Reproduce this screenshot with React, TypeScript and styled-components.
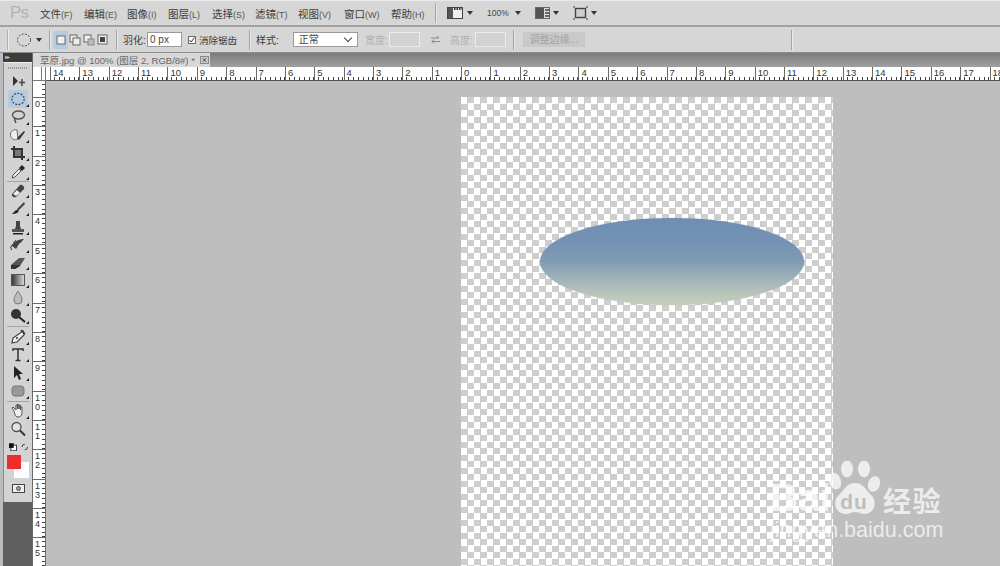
import React from "react";
import styled, { createGlobalStyle } from "styled-components";

const Global = createGlobalStyle`
  html, body { margin: 0; padding: 0; background: #bebebe; }
  * { box-sizing: border-box; }
`;

const UNIT = 29.36;
const FONT = `"Liberation Sans", "Noto Sans CJK SC", sans-serif`;

const Page = styled.div`
  width: 1000px; height: 566px; overflow: hidden;
  display: flex; flex-direction: column;
  font-family: ${FONT}; color: #3a3a3a;
`;

/* ---------- menu bar ---------- */
const MenuBar = styled.div`
  height: 25px; flex: none; display: flex; align-items: center;
  background: #d6d6d6; border-top: 1px solid #eaeaea;
`;
const Logo = styled.div`
  width: 40px; padding-left: 10px; font-size: 17px; color: #b2b2b2; letter-spacing: -0.8px;
`;
const MenuList = styled.div`display: flex; width: 395px;`;
const MenuItem = styled.div<{ $w: number }>`
  width: ${p => p.$w}px; font-size: 10.5px; white-space: nowrap; color: #3c3c3c;
`;
const Hot = styled.span`font-size: 9px; color: #555;`;
const Sep = styled.div<{ $ml?: number; $mr?: number; $h?: number }>`
  width: 1px; height: ${p => p.$h ?? 20}px; flex: none; background: #a3a3a3;
  margin-left: ${p => p.$ml ?? 0}px; margin-right: ${p => p.$mr ?? 0}px;
  box-shadow: 1px 0 0 #e8e8e8;
`;
const Arrow = styled.span<{ $ml?: number }>`
  display: inline-block; flex: none; margin-left: ${p => p.$ml ?? 0}px;
  border-left: 3px solid transparent; border-right: 3px solid transparent;
  border-top: 4px solid #333;
`;
const Slot = styled.div<{ $ml?: number; $w?: number }>`
  display: flex; align-items: center; flex: none;
  margin-left: ${p => p.$ml ?? 0}px;
  ${p => (p.$w ? `width: ${p.$w}px;` : "")}
`;
const ZoomText = styled.span`font-size: 8.5px; color: #444; width: 21px; white-space: nowrap;`;

/* ---------- options bar ---------- */
const Divider = styled.div`height: 2px; flex: none; background: #a2a2a2;`;
const OptionsBar = styled.div`
  height: 26px; flex: none; display: flex; align-items: center;
  background: #d6d6d6; border-bottom: 1px solid #8e8e8e;
`;
const Grip = styled.div`
  width: 1px; height: 20px; margin-left: 7px; flex: none; background: #b0b0b0; box-shadow: 1px 0 0 #eee;
`;
const ModeBtn = styled.div<{ $on?: boolean; $w: number }>`
  width: ${p => p.$w}px; height: 18px; flex: none; display: flex; align-items: center; justify-content: center;
  background: ${p => (p.$on ? "#b4cbe0" : "transparent")};
`;
const Label = styled.span<{ $ml?: number; $w?: number; $off?: boolean; $s?: number }>`
  display: block; flex: none; font-size: ${p => p.$s ?? 10}px; white-space: nowrap;
  margin-left: ${p => p.$ml ?? 0}px;
  width: ${p => (p.$w ? `${p.$w}px` : "auto")};
  color: ${p => (p.$off ? "#b2b2b2" : "#3c3c3c")};
`;
const Field = styled.div<{ $ml?: number; $w: number; $off?: boolean }>`
  width: ${p => p.$w}px; height: 15px; flex: none; margin-left: ${p => p.$ml ?? 0}px;
  background: ${p => (p.$off ? "#d2d2d2" : "#fff")};
  border: 1px solid ${p => (p.$off ? "#ececec" : "#9a9a9a")};
  font-size: 10px; line-height: 13px; padding-left: 2px; color: #444;
  display: flex; align-items: center; justify-content: space-between;
`;
const Check = styled.div`
  width: 8px; height: 8px; flex: none; margin-left: 6px; background: #fff; border: 1px solid #6f6f6f;
  display: flex; align-items: center; justify-content: center;
`;
const Chevron = styled.span`
  width: 6px; height: 6px; margin: -3px 6px 0 0;
  border-right: 1px solid #444; border-bottom: 1px solid #444; transform: rotate(45deg);
`;
const AdjustBtn = styled.div`
  width: 62px; height: 15px; flex: none; margin-left: 9px;
  background: #c9c9c9; color: #a3a3a3; font-size: 10px; text-align: center; line-height: 15px;
`;

/* ---------- body ---------- */
const Body = styled.div`flex: 1; min-height: 0; display: flex;`;
const LeftCol = styled.div`
  width: 33px; flex: none; display: flex; flex-direction: column; padding-left: 3px;
  background: #b9bdc1; border-right: 1px solid #6a6a6a;
`;
const PanelHead = styled.div`
  height: 9px; flex: none; background: #3c3c3c; color: #c8c8c8;
  font-size: 6px; line-height: 8px; padding-left: 2px; letter-spacing: -1px;
`;
const Tools = styled.div`
  flex: none; height: 440px; background: #d3d3d3; border-left: 1px solid #8c8c8c;
  border-top: 1px solid #eee; display: flex; flex-direction: column; align-items: center;
`;
const DarkFill = styled.div`flex: 1; background: #5f5f5f;`;
const ToolGrip = styled.div`
  width: 20px; height: 2px; margin: 4px 0 2px; flex: none;
  background: repeating-linear-gradient(90deg, #9a9a9a 0 1px, transparent 1px 2px);
`;
const Tool = styled.div<{ $h: number; $on?: boolean; $more?: boolean }>`
  width: 20px; height: ${p => p.$h}px; flex: none; position: relative;
  display: flex; align-items: center; justify-content: center;
  background: ${p => (p.$on ? "#b4cbe0" : "transparent")};
  ${p => p.$more ? `&::after { content: ""; position: absolute; right: -1px; bottom: 1px; border-left: 3px solid transparent; border-bottom: 3px solid #222; }` : ""}
`;
const ToolSep = styled.div<{ $mt: number; $mb: number }>`
  width: 22px; height: 1px; flex: none; background: #a5a5a5;
  margin: ${p => p.$mt}px 0 ${p => p.$mb}px;
`;
const Swatches = styled.div`
  position: relative; width: 24px; height: 23px; flex: none; margin-top: 1px;
`;
const Fg = styled.div`
  position: absolute; left: 1px; top: 0; width: 14px; height: 14px; background: #ee2b2d; z-index: 1;
`;
const Bg = styled.div`
  position: absolute; left: 8px; top: 7px; width: 15px; height: 16px; background: #fff;
`;
const Mini = styled.div`
  width: 20px; height: 15px; flex: none; margin-top: 2px; display: flex; align-items: center; gap: 4px; padding-left: 1px;
`;
const Mask = styled.div`
  width: 13px; height: 9px; margin-top: 6px; flex: none; background: #eee; border: 1px solid #444;
  display: flex; align-items: center; justify-content: center;
`;
const Hole = styled.div`width: 5px; height: 5px; border-radius: 50%; background: #999; border: 1px solid #555;`;

const RightCol = styled.div`flex: 1; min-width: 0; display: flex; flex-direction: column;`;
const TabBar = styled.div`
  height: 14px; flex: none; display: flex;
  background: linear-gradient(#7b7b7b, #a0a0a0);
`;
const Tab = styled.div`
  width: 177px; flex: none; background: #d8d8d8; display: flex; align-items: center;
  padding-left: 7px; font-size: 9.5px; color: #666; white-space: nowrap; gap: 5px;
`;
const TabClose = styled.div`
  width: 9px; height: 8px; flex: none; border: 1px solid #888; background: #ccc;
  color: #444; font-size: 9px; line-height: 6px; text-align: center;
`;

const HRulerRow = styled.div`height: 14px; flex: none; display: flex; background: #fff;`;
const Corner = styled.div`
  width: 13px; flex: none; background: #fff;
  border-right: 1px solid #777; border-bottom: 1px solid #777;
  background-image: linear-gradient(#777, #777); background-size: 1px 100%;
  background-position: 8px 0; background-repeat: no-repeat;
`;
const HRuler = styled.div`
  flex: 1; display: flex; overflow: hidden; padding-left: 4px; border-bottom: 1px solid #555;
`;
const HCell = styled.div`
  width: ${UNIT}px; flex: none; height: 100%; border-left: 1.5px solid #6a6a6a;
  padding-left: 2px; font-size: 9.5px; line-height: 11px; color: #333;
  background:
    repeating-linear-gradient(90deg, #444 0 1px, transparent 1px ${UNIT / 6}px) 3px 100% / 100% 3px no-repeat;
`;

const Work = styled.div`flex: 1; min-height: 0; display: flex;`;
const VRuler = styled.div`
  width: 13px; flex: none; display: flex; flex-direction: column; overflow: hidden;
  background: #fff; border-right: 1px solid #6a6a6a;
`;
const VHead = styled.div`
  height: 16px; flex: none;
  background: repeating-linear-gradient(180deg, #444 0 1px, transparent 1px ${UNIT / 6}px) 100% 3px / 3px 100% no-repeat;
`;
const VCell = styled.div`
  height: ${UNIT}px; flex: none; border-top: 1.5px solid #6a6a6a;
  padding: 2px 0 0 2px; font-size: 9px; line-height: 9px; color: #333;
  background: repeating-linear-gradient(180deg, #444 0 1px, transparent 1px ${UNIT / 6}px) 100% 3px / 3px 100% no-repeat;
  span { display: block; width: 6px; }
`;

const Canvas = styled.div`
  flex: 1; min-width: 0; background: #bebebe; padding: 16px 0 0 415px; position: relative; overflow: hidden;
`;
const Doc = styled.div`
  width: 372px; height: 480px; position: relative;
  background: repeating-conic-gradient(#cecece 0 25%, #fff 0 50%) 0 0 / 13px 13px;
`;
const Sky = styled.div`
  position: absolute; left: 79px; top: 121px; width: 264px; height: 87px; border-radius: 50%;
  background: linear-gradient(#6f8eb2 0%, #7592b3 30%, #819bb4 50%, #9fb3b8 70%, #bcc8ba 90%, #c6ceba 100%);
  box-shadow: 0 0 1px rgba(120,140,170,.6);
`;
const Watermark = styled.div`
  position: absolute; left: 724px; top: 380px; width: 210px; height: 90px; color: rgba(255,255,255,.72);
`;
const BaiText = styled.div`
  position: absolute; left: 0; top: 18px; font: 700 39px/38px "Liberation Sans", sans-serif;
`;
const Paw = styled.svg`position: absolute; left: 50px; top: 0;`;
const Du = styled.div`
  position: absolute; left: 69px; top: 31px; width: 30px; text-align: center; letter-spacing: 1px;
  font: 700 21px/20px "Liberation Sans", sans-serif; color: #bebebe;
`;
const Jing = styled.div`
  position: absolute; left: 113px; top: 21px; font: 700 28px/36px "Noto Sans CJK SC", sans-serif; white-space: nowrap; letter-spacing: 1.5px;
`;
const Url = styled.div`
  position: absolute; left: 0; top: 56px; font: 400 21.5px/26px "Liberation Sans", sans-serif; white-space: nowrap;
`;

/* ---------- icons ---------- */
const Ico = ({ w = 16, h = 16, children }: { w?: number; h?: number; children: React.ReactNode }) => (
  <svg width={w} height={h} viewBox={`0 0 ${w} ${h}`} fill="none">{children}</svg>
);

const modeIcon = (n: number) => (
  <Ico w={12} h={12}>
    {n === 0 && <rect x="2" y="2" width="8" height="8" fill="#f2f2f2" stroke="#666" />}
    {n === 1 && <><rect x="1" y="1" width="7" height="7" fill="#eee" stroke="#666" /><rect x="4" y="4" width="7" height="7" fill="#eee" stroke="#666" /></>}
    {n === 2 && <><rect x="1" y="1" width="7" height="7" fill="#eee" stroke="#666" /><rect x="5" y="5" width="6" height="6" fill="#bbb" stroke="#888" /></>}
    {n === 3 && <><rect x="1" y="1" width="9" height="9" fill="#eee" stroke="#666" /><rect x="3" y="3" width="5" height="5" fill="#444" /></>}
  </Ico>
);

type ToolDef = { h: number; on?: boolean; more?: boolean; icon: React.ReactNode };
const TOOLS: { mt: number; mb: number; items: ToolDef[] }[] = [
  {
    mt: 0, mb: 0,
    items: [
      { h: 19, icon: <Ico><path d="M3 3v10l5-5z" fill="#333" /><path d="M12 6v7M9 9.5h6" stroke="#444" strokeWidth="1.4" /></Ico> },
      { h: 18, on: true, more: true, icon: <Ico><ellipse cx="8" cy="8" rx="6.2" ry="5.6" stroke="#444" strokeWidth="1.2" strokeDasharray="2 1.3" /></Ico> },
      { h: 18, more: true, icon: <Ico><ellipse cx="8.5" cy="6" rx="6" ry="4" stroke="#555" strokeWidth="1.4" /><path d="M5 9c-1 2 0 3 1 5" stroke="#444" strokeWidth="1.4" /></Ico> },
      { h: 18, more: true, icon: <Ico><path d="M7 3a5 5 0 1 0 1 9z" fill="#eee" stroke="#666" /><path d="M7 11l7-7 1 1-6 8z" fill="#333" /></Ico> },
      { h: 18, more: true, icon: <Ico><path d="M4 1v11h11M1 4h11v11" stroke="#333" strokeWidth="2" /><path d="M5 5h6v6H5z" fill="#777" /></Ico> },
      { h: 19, more: true, icon: <Ico><path d="M2 14l1-3 6-6 2 2-6 6z" fill="#eee" stroke="#555" /><path d="M9 4l3-3 3 3-3 3z" fill="#222" /></Ico> },
    ],
  },
  {
    mt: 0, mb: 0,
    items: [
      { h: 17, more: true, icon: <Ico><path d="M2 11l8-9c2-1 5 2 4 4l-8 8c-2 1-5-1-4-3z" fill="#444" /><path d="M3 11l4-4 3 3-4 3z" fill="#eee" /></Ico> },
      { h: 18, more: true, icon: <Ico><path d="M14 2L7 9l1 2 7-7z" fill="#444" /><path d="M1 14c3 0 3-4 6-4 2 0 2 2 0 3-2 1-4 1-6 1z" fill="#222" /></Ico> },
      { h: 19, more: true, icon: <Ico><path d="M6 2h4v5l1 3H5l1-3z" fill="#444" /><rect x="2" y="10" width="12" height="3" fill="#555" /><rect x="3" y="14" width="10" height="1.5" fill="#222" /></Ico> },
      { h: 18, more: true, icon: <Ico><path d="M2 9c2-5 7-7 12-7-2 2-2 3-5 5l-3 5z" fill="#444" /><path d="M2 13a3 3 0 0 1 4-5" stroke="#333" /><path d="M6 3l-3 3" stroke="#555" /></Ico> },
      { h: 17, more: true, icon: <Ico><path d="M1 10l8-7h6l-5 8-5 3H1z" fill="#555" /><path d="M1 10h8l1 1-5 3H1z" fill="#333" /></Ico> },
      { h: 18, more: true, icon: <Ico><defs><linearGradient id="g"><stop stopColor="#333" /><stop offset="1" stopColor="#ddd" /></linearGradient></defs><rect x="1.5" y="2.5" width="13" height="11" fill="url(#g)" stroke="#555" /></Ico> },
      { h: 18, more: true, icon: <Ico><path d="M8 1c3 5 4 6 4 9a4 4 0 0 1-8 0c0-3 1-4 4-9z" fill="#bdbdbd" stroke="#777" /></Ico> },
      { h: 18, more: true, icon: <Ico><circle cx="6" cy="6" r="5" fill="#333" /><path d="M9 9l6 5" stroke="#222" strokeWidth="2" /></Ico> },
    ],
  },
  {
    mt: 1, mb: 1,
    items: [
      { h: 18, more: true, icon: <Ico><path d="M13 2l1 4-7 7-5 1 1-5z" fill="#eee" stroke="#444" strokeWidth="1.2" /><path d="M11 1l4 4" stroke="#333" strokeWidth="1.6" /><circle cx="7" cy="9" r="1" fill="#333" /></Ico> },
      { h: 17, more: true, icon: <Ico><path d="M3 4V2h10v2M8 2v11M5.5 13.5h5" stroke="#333" strokeWidth="1.5" /></Ico> },
      { h: 19, more: true, icon: <Ico><path d="M4 1v12l3-3 2 5 2-1-2-5h4z" fill="#222" /></Ico> },
      { h: 18, more: true, icon: <Ico><rect x="2" y="3" width="12" height="10" rx="3" fill="#999" stroke="#777" /></Ico> },
    ],
  },
  {
    mt: 1, mb: 0,
    items: [
      { h: 18, more: true, icon: <Ico><path d="M4 8L2 5l1-1 3 3V2h1.5v4V1.5H9V6V2.5h1.5V7V4H12v6c0 3-2 4-4 4-3 0-3-3-4-6z" fill="#eee" stroke="#444" strokeWidth=".9" /></Ico> },
      { h: 17, icon: <Ico><circle cx="6.5" cy="6" r="4.5" fill="#e4e4e4" stroke="#555" strokeWidth="1.3" /><path d="M10 9.5l5 5" stroke="#333" strokeWidth="2" /></Ico> },
    ],
  },
];

const hLabels = [14,13,12,11,10,9,8,7,6,5,4,3,2,1,0,1,2,3,4,5,6,7,8,9,10,11,12,13,14,15,16,17,18];
const vLabels = [0,1,2,3,4,5,6,7,8,9,10,11,12,13,14,15];
const menus: [string, string, number][] = [
  ["文件", "(F)", 44], ["编辑", "(E)", 43], ["图像", "(I)", 41], ["图层", "(L)", 44], ["选择", "(S)", 43],
  ["滤镜", "(T)", 43], ["视图", "(V)", 46], ["窗口", "(W)", 47], ["帮助", "(H)", 44],
];

export default function App() {
  return (
    <Page>
      <Global />
      <MenuBar>
        <Logo>Ps</Logo>
        <MenuList>{menus.map(([m, k, w]) => <MenuItem key={m} $w={w}>{m}<Hot>{k}</Hot></MenuItem>)}</MenuList>
        <Sep />
        <Slot $ml={11}><Ico w={17} h={14}><rect x=".5" y="1.5" width="15" height="11" fill="#eee" stroke="#444" /><rect x="1" y="2" width="5" height="10" fill="#555" /><path d="M7 3h8" stroke="#333" strokeWidth="2" strokeDasharray="1.5 1" /></Ico></Slot>
        <Arrow $ml={3} />
        <Slot $ml={14}><ZoomText>100%</ZoomText></Slot>
        <Arrow $ml={7} />
        <Slot $ml={14}><Ico w={15} h={14}><rect x=".5" y="1.5" width="14" height="11" fill="#ddd" stroke="#666" /><rect x="1" y="2" width="8" height="10" fill="#555" /><path d="M10 4h4M10 7h4M10 10h4" stroke="#444" strokeWidth="1.6" /></Ico></Slot>
        <Arrow $ml={3} />
        <Slot $ml={14}><Ico w={15} h={14}><rect x="2.5" y="2.5" width="10" height="9" fill="#cfcfcf" stroke="#444" strokeWidth="1.4" /><path d="M0 1h2M13 1h2M0 13h2M13 13h2" stroke="#444" /></Ico></Slot>
        <Arrow $ml={3} />
      </MenuBar>
      <Divider />
      <OptionsBar>
        <Grip />
        <Slot $ml={8}><Ico w={16} h={14}><ellipse cx="8" cy="7" rx="6.5" ry="6" stroke="#555" strokeDasharray="2 1.3" /></Ico></Slot>
        <Arrow $ml={4} />
        <Sep $ml={7} />
        <Slot $ml={3}>
          <ModeBtn $on $w={15}>{modeIcon(0)}</ModeBtn>
          <ModeBtn $w={14}>{modeIcon(1)}</ModeBtn>
          <ModeBtn $w={14}>{modeIcon(2)}</ModeBtn>
          <ModeBtn $w={14}>{modeIcon(3)}</ModeBtn>
        </Slot>
        <Sep $ml={6} />
        <Label $ml={6} $w={24}>羽化:</Label>
        <Field $w={35}>0 px</Field>
        <Check><svg width="6" height="6" viewBox="0 0 6 6"><path d="M.5 3l1.7 2L5.5 .5" stroke="#333" fill="none" /></svg></Check>
        <Label $ml={3} $w={50} $s={9.5}>消除锯齿</Label>
        <Sep />
        <Label $ml={6} $w={37}>样式:</Label>
        <Field $w={65}>&nbsp;正常<Chevron /></Field>
        <Label $ml={7} $w={24} $off>宽度:</Label>
        <Field $w={31} $off />
        <Slot $ml={10} $w={20}><Ico w={11} h={9}><path d="M1 3h8M7 1l2 2M10 6.5H2M4 4.5l-2 2M4 8.5l-2-2" stroke="#888" /></Ico></Slot>
        <Label $w={25} $off>高度:</Label>
        <Field $w={31} $off />
        <Sep $ml={7} />
        <AdjustBtn>调整边缘...</AdjustBtn>
        <Sep $ml={206} />
      </OptionsBar>
      <Body>
        <LeftCol>
          <PanelHead>▸▸</PanelHead>
          <Tools>
            <ToolGrip />
            {TOOLS.map((g, i) => (
              <React.Fragment key={i}>
                {i > 0 && <ToolSep $mt={g.mt} $mb={g.mb} />}
                {g.items.map((t, j) => <Tool key={j} $h={t.h} $on={t.on} $more={t.more}>{t.icon}</Tool>)}
              </React.Fragment>
            ))}
            <Mini>
              <Ico w={8} h={8}><rect x="2" y="2" width="6" height="6" fill="#fff" stroke="#333" /><rect width="5" height="5" fill="#111" /></Ico>
              <Ico w={8} h={8}><path d="M1 4a3 3 0 0 1 3-3M7 4a3 3 0 0 1-3 3" stroke="#333" /></Ico>
            </Mini>
            <Swatches><Fg /><Bg /></Swatches>
            <Mask><Hole /></Mask>
          </Tools>
          <DarkFill />
        </LeftCol>
        <RightCol>
          <TabBar>
            <Tab>草原.jpg @ 100% (图层 2, RGB/8#) *<TabClose>×</TabClose></Tab>
          </TabBar>
          <HRulerRow>
            <Corner />
            <HRuler>{hLabels.map((n, i) => <HCell key={i}>{n}</HCell>)}</HRuler>
          </HRulerRow>
          <Work>
            <VRuler>
              <VHead />
              {vLabels.map(n => (
                <VCell key={n}>{String(n).split("").map((d, i) => <span key={i}>{d}</span>)}</VCell>
              ))}
            </VRuler>
            <Canvas>
              <Doc><Sky /></Doc>
              <Watermark>
                <BaiText>Bai</BaiText>
                <Paw width="70" height="56" viewBox="0 0 70 56" fill="rgba(255,255,255,.72)">
                  <ellipse cx="15" cy="20" rx="6" ry="8.5" transform="rotate(-18 15 20)" />
                  <ellipse cx="27" cy="8" rx="6" ry="8.5" />
                  <ellipse cx="44" cy="8" rx="6" ry="8.5" />
                  <ellipse cx="54" cy="23" rx="6" ry="8" transform="rotate(20 54 23)" />
                  <path d="M35 22c8 0 10 6 16 12c7 6 4 19-7 19c-3 0-6-2-9-2s-6 2-9 2c-11 0-14-13-7-19c6-6 8-12 16-12z" />
                </Paw>
                <Du>du</Du>
                <Jing>经验</Jing>
                <Url>jingyan.baidu.com</Url>
              </Watermark>
            </Canvas>
          </Work>
        </RightCol>
      </Body>
    </Page>
  );
}
